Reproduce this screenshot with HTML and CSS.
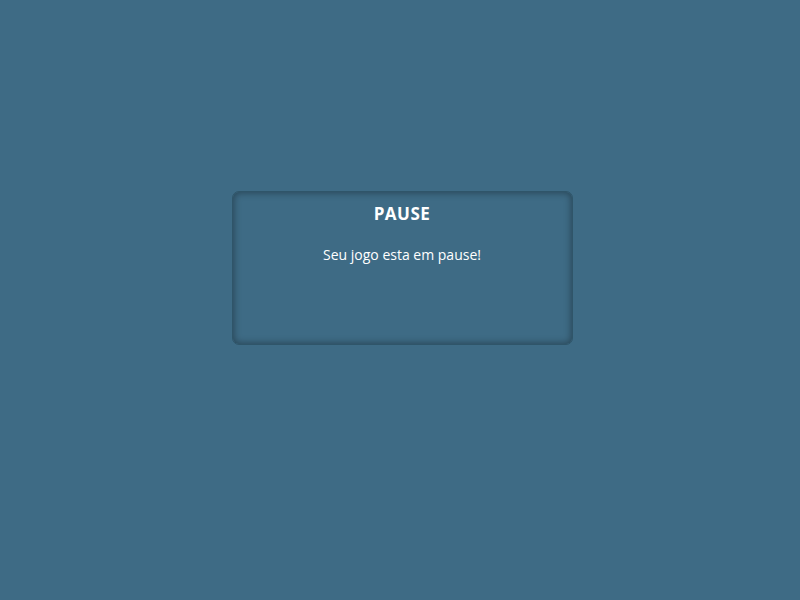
FILE: index.html
```html
<!DOCTYPE html>
<html>
<head>
<meta charset="utf-8">
<link rel="stylesheet" href="styles.css">
</head>
<body>
<div class="stage">
  <div class="dialog">
    <h1 class="title">PAUSE</h1>
    <p class="message">Seu jogo esta em pause!</p>
  </div>
</div>
</body>
</html>
```

FILE: styles.css
```css
html, body {
  margin: 0;
  padding: 0;
  height: 100%;
  background: #3e6b85;
  font-family: "Open Sans", "Noto Sans", sans-serif;
  color: #ffffff;
}
.stage {
  height: 100%;
  display: flex;
  justify-content: center;
  align-items: flex-start;
  padding: 191px 0 0 4px;
  box-sizing: border-box;
}
.dialog {
  width: 341px;
  height: 154px;
  box-sizing: border-box;
  border-radius: 7px;
  border: 1px solid #2f5569;
  box-shadow: inset 0 0 7px 1px rgba(0, 0, 0, 0.35);
  text-align: center;
  padding-top: 12px;
}
.title {
  margin: 0;
  font-size: 17px;
  font-weight: 700;
  line-height: 20px;
  letter-spacing: 0.5px;
}
.message {
  margin: 22px 0 0;
  font-size: 14px;
  line-height: 18px;
}
```
